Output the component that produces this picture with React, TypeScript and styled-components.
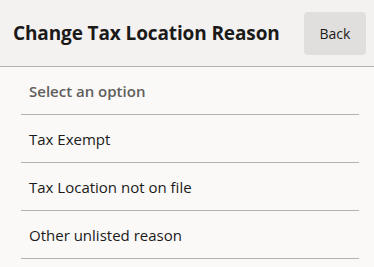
import styled, { createGlobalStyle } from 'styled-components';

const GlobalStyle = createGlobalStyle`
  body {
    margin: 0;
    background: #faf9f8;
    font-family: "Open Sans", "Noto Sans", sans-serif;
  }
`;

const Header = styled.header`
  display: flex;
  align-items: center;
  justify-content: space-between;
  height: 66px;
  padding: 0 8px 0 13px;
  background: #f3f2f1;
  border-bottom: 1px solid #b3b0ad;
`;

const Title = styled.h1`
  margin: 0;
  font-size: 19px;
  font-weight: 700;
  color: #1b1a19;
  letter-spacing: -0.12px;
`;

const BackButton = styled.button`
  width: 62px;
  height: 43px;
  border: none;
  border-radius: 4px;
  background: #e1dfdd;
  color: #1b1a19;
  font-family: inherit;
  font-size: 14px;
  cursor: pointer;
`;

const List = styled.ul`
  list-style: none;
  margin: 0;
  padding: 0 15px 0 21px;
`;

const Option = styled.li<{ $placeholder?: boolean }>`
  display: flex;
  align-items: center;
  box-sizing: border-box;
  height: 48px;
  padding-left: 8px;
  border-bottom: 1px solid #b3b0ad;
  font-size: 15px;
  font-weight: ${({ $placeholder }) => ($placeholder ? 600 : 400)};
  color: ${({ $placeholder }) => ($placeholder ? '#605e5c' : '#1b1a19')};
`;

const options = ['Tax Exempt', 'Tax Location not on file', 'Other unlisted reason'];

export default function App() {
  return (
    <>
      <GlobalStyle />
      <Header>
        <Title>Change Tax Location Reason</Title>
        <BackButton>Back</BackButton>
      </Header>
      <List>
        <Option $placeholder>Select an option</Option>
        {options.map((o) => (
          <Option key={o}>{o}</Option>
        ))}
      </List>
    </>
  );
}
